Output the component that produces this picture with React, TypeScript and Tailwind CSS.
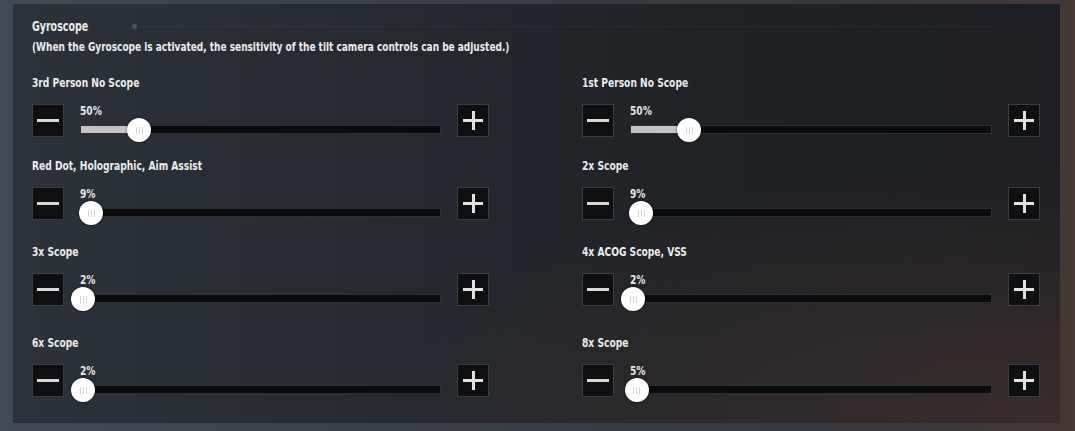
const FONT = "font-['DejaVu_Sans_Condensed','DejaVu_Sans',sans-serif] font-bold origin-left scale-x-[0.78] whitespace-nowrap";

type Setting = { label: string; value: number };

const rows: { gap: string; items: Setting[] }[] = [
  {
    gap: "mt-[20px]",
    items: [
      { label: "3rd Person No Scope", value: 50 },
      { label: "1st Person No Scope", value: 50 },
    ],
  },
  {
    gap: "mt-[21px]",
    items: [
      { label: "Red Dot, Holographic, Aim Assist", value: 9 },
      { label: "2x Scope", value: 9 },
    ],
  },
  {
    gap: "mt-[24px]",
    items: [
      { label: "3x Scope", value: 2 },
      { label: "4x ACOG Scope, VSS", value: 2 },
    ],
  },
  {
    gap: "mt-[29px]",
    items: [
      { label: "6x Scope", value: 2 },
      { label: "8x Scope", value: 5 },
    ],
  },
];

function StepButton({ plus }: { plus?: boolean }) {
  return (
    <button className="mt-[2px] w-[32px] h-[33px] shrink-0 bg-[#0e0f11] border border-[#3a3d43] flex items-center justify-center">
      {plus ? (
        <span className="relative w-[20px] h-[19px]">
          <span className="absolute left-0 right-0 top-[8px] h-[2.5px] bg-[#e2e2e2]" />
          <span className="absolute top-0 bottom-0 left-[9px] w-[2.5px] bg-[#e2e2e2]" />
        </span>
      ) : (
        <span className="w-[22px] h-[3px] bg-[#d8d8d8]" />
      )}
    </button>
  );
}

function Slider({ value }: { value: number }) {
  const pos = (value / 300) * 97;
  return (
    <div className="flex items-start">
      <StepButton />
      <div className="flex-1 mx-[16px] pt-[2px]">
        <div className={`${FONT} text-[13px] leading-[14px] text-[#e6e6e6]`}>{value}%</div>
        <div className="relative mt-[7px] h-[9px] bg-[#0a0b0d] border border-[#2c2f34]">
          <div className="absolute left-0 top-0 bottom-0 bg-[#c4c4c4]" style={{ width: `${pos}%` }} />
          <div
            className="absolute -top-[8px] w-[24px] h-[24px] -ml-[12px] rounded-full bg-white shadow-[0_0_3px_rgba(0,0,0,0.6)] flex items-center justify-center gap-[2px]"
            style={{ left: `${pos}%` }}
          >
            <span className="w-px h-[7px] bg-[#d2d2d2]" />
            <span className="w-px h-[7px] bg-[#d2d2d2]" />
            <span className="w-px h-[7px] bg-[#d2d2d2]" />
          </div>
        </div>
      </div>
      <StepButton plus />
    </div>
  );
}

export default function App() {
  return (
    <div className="w-[1075px] h-[431px] overflow-hidden pt-[4px] pl-[13px] bg-[linear-gradient(90deg,#404a54_0%,#363c44_55%,#37363a_85%,#453833_100%)]">
      <div className="w-[1047px] h-[419px] pt-[14px] pl-[19px] pr-[20px] bg-[radial-gradient(ellipse_at_100%_100%,rgba(120,75,60,0.32),transparent_45%),linear-gradient(90deg,#2c323a_0%,#252a30_35%,#1f2227_65%,#1c1e23_100%)]">
        <div className="flex items-center h-[16px]">
          <span className={`${FONT} block w-[60px] text-[13.5px] leading-[16px] text-[#ececec]`}>Gyroscope</span>
          <span className="ml-[40px] w-[5px] h-[5px] rounded-full bg-[#4a525c]" />
          <span className="ml-[3px] mr-[48px] flex-1 h-px bg-white/[0.04]" />
        </div>
        <div className={`${FONT} mt-[5px] text-[12.8px] leading-[16px] text-[#ececec]`}>
          (When the Gyroscope is activated, the sensitivity of the tilt camera controls can be adjusted.)
        </div>
        {rows.map((row, i) => (
          <div key={i} className={`${row.gap} grid grid-cols-[457px_458px] gap-x-[93px]`}>
            {row.items.map((s) => (
              <div key={s.label}>
                <div className={`${FONT} text-[13px] leading-[16px] text-[#ececec]`}>{s.label}</div>
                <div className="mt-[11px]">
                  <Slider value={s.value} />
                </div>
              </div>
            ))}
          </div>
        ))}
      </div>
    </div>
  );
}
